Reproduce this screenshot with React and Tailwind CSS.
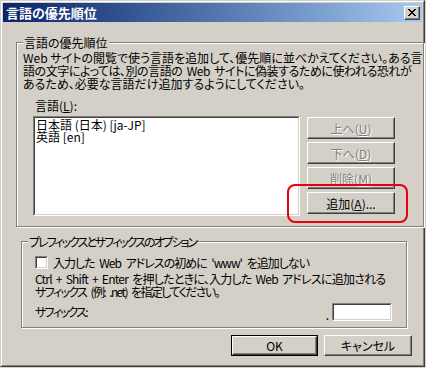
function Btn({ children, disabled, def, className = '' }) {
  const face = (
    <div className="h-full w-full flex items-center justify-center border border-t-white border-l-white border-r-[#404040] border-b-[#404040] shadow-[inset_-1px_-1px_0_#808080] bg-[#d4d0c8]">
      <span className={disabled ? "text-[#808080] [text-shadow:1px_1px_0_#fff]" : "text-black"}>{children}</span>
    </div>
  );
  if (def) {
    return <div className={`border border-black ${className}`}>{face}</div>;
  }
  return <div className={className}>{face}</div>;
}

function Group({ title, titleClass = '', className = '', children }) {
  return (
    <fieldset className={`border border-[#808080] shadow-[inset_1px_1px_0_#fff,1px_1px_0_#fff] ${className}`}>
      <legend className={`ml-[6px] px-px bg-[#d4d0c8] leading-[13px] ${titleClass}`}>{title}</legend>
      {children}
    </fieldset>
  );
}

function Sunken({ className = '', children }) {
  return (
    <div className={`border border-t-[#808080] border-l-[#808080] border-r-white border-b-white ${className}`}>
      <div className="h-full w-full border border-t-[#404040] border-l-[#404040] border-r-[#d4d0c8] border-b-[#d4d0c8] bg-white">
        {children}
      </div>
    </div>
  );
}

export default function App() {
  return (
    <div className="relative w-[426px] h-[368px] bg-[#d4d0c8] font-['MS_UI_Gothic','Noto_Sans_CJK_JP',sans-serif] text-[12px] leading-[13px] text-black [font-feature-settings:'palt']">
      <div className="w-[425px] h-[367px] border border-t-[#d4d0c8] border-l-[#d4d0c8] border-r-[#404040] border-b-[#404040]">
        <div className="h-full border border-t-white border-l-white border-r-[#808080] border-b-[#808080] p-px flex flex-col">
          {/* title bar */}
          <div className="h-[19px] flex items-center bg-linear-to-r from-[#0a246a] to-[#a6caf0] pl-[3px] pr-[2px]">
            <span className="text-white font-bold text-[13px] leading-[15px]">言語の優先順位</span>
            <div className="ml-auto w-[16px] h-[14px] border border-t-white border-l-white border-r-[#404040] border-b-[#404040] shadow-[inset_-1px_-1px_0_#808080] bg-[#d4d0c8] flex items-center justify-center">
              <svg width="8" height="7" viewBox="0 0 8 7" shapeRendering="crispEdges">
                <path d="M0 0h2v1h-2zM6 0h2v1h-2zM1 1h2v1h-2zM5 1h2v1h-2zM2 2h4v1h-4zM3 3h2v1h-2zM2 4h4v1h-4zM1 5h2v1h-2zM5 5h2v1h-2zM0 6h2v1h-2zM6 6h2v1h-2z" fill="#000" />
              </svg>
            </div>
          </div>

          {/* group 1 */}
          <Group title="言語の優先順位" className="mt-[14px] ml-[13px] w-[391px] h-[191px]">
            <div className="ml-[6px] mt-[2px] whitespace-nowrap">
              <div>Web サイトの閲覧で使う言語を追加して、優先順に並べかえてください。ある言</div>
              <div className="tracking-[-0.45px] [word-spacing:2px]">語の文字によっては、別の言語の Web サイトに偽装するために使われる恐れが</div>
              <div>あるため、必要な言語だけ追加するようにしてください。</div>
            </div>
            <div className="ml-[18px] mt-[9px]">言語(<u>L</u>):</div>
            <div className="flex ml-[16px] mt-[4px]">
              <Sunken className="w-[267px] h-[100px]">
                <div className="pl-px pt-px whitespace-nowrap leading-[12px]">
                  <div>日本語 (日本) [ja-JP]</div>
                  <div>英語 [en]</div>
                </div>
              </Sunken>
              <div className="ml-[7px] mt-px flex flex-col gap-[3px]">
                <Btn disabled className="w-[88px] h-[22px]">上へ(<u>U</u>)</Btn>
                <Btn disabled className="w-[88px] h-[22px]">下へ(<u>D</u>)</Btn>
                <Btn disabled className="w-[88px] h-[22px]">削除(<u>M</u>)</Btn>
                <Btn className="w-[88px] h-[22px]">追加(<u>A</u>)...</Btn>
              </div>
            </div>
          </Group>

          {/* group 2 */}
          <Group title="プレフィックスとサフィックスのオプション" titleClass="tracking-[-2px]" className="mt-[8px] ml-[18px] w-[386px] h-[93px]">
            <div className="flex items-center ml-[13px] mt-[8px] h-[13px]">
              <Sunken className="w-[13px] h-[13px]" />
              <span className="ml-[5px] whitespace-nowrap tracking-[-1px] [word-spacing:3px]">入力した Web アドレスの初めに 'www' を追加しない</span>
            </div>
            <div className="ml-[13px] mt-[3px] whitespace-nowrap">
              <div className="tracking-[-0.75px] [word-spacing:2px]">Ctrl + Shift + Enter を押したときに、入力した Web アドレスに追加される</div>
              <div className="tracking-[-1.6px] [word-spacing:3px]">サフィックス (例: .net) を指定してください。</div>
            </div>
            <div className="flex items-center ml-[13px] mr-[14px] mt-[4px]">
              <span className="tracking-[-1.8px]">サフィックス:</span>
              <span className="ml-auto mr-[3px] mt-[6px]">.</span>
              <Sunken className="w-[60px] h-[18px]" />
            </div>
          </Group>

          {/* bottom buttons */}
          <div className="flex ml-[228px] mt-[7px] gap-[6px]">
            <Btn def className="w-[87px] h-[21px]">OK</Btn>
            <Btn className="w-[88px] h-[21px]">キャンセル</Btn>
          </div>
        </div>
      </div>

      {/* highlight */}
      <div className="absolute left-[287px] top-[184px] w-[121px] h-[39px] border-2 border-[#e8000b] rounded-[8px]" />
    </div>
  );
}
